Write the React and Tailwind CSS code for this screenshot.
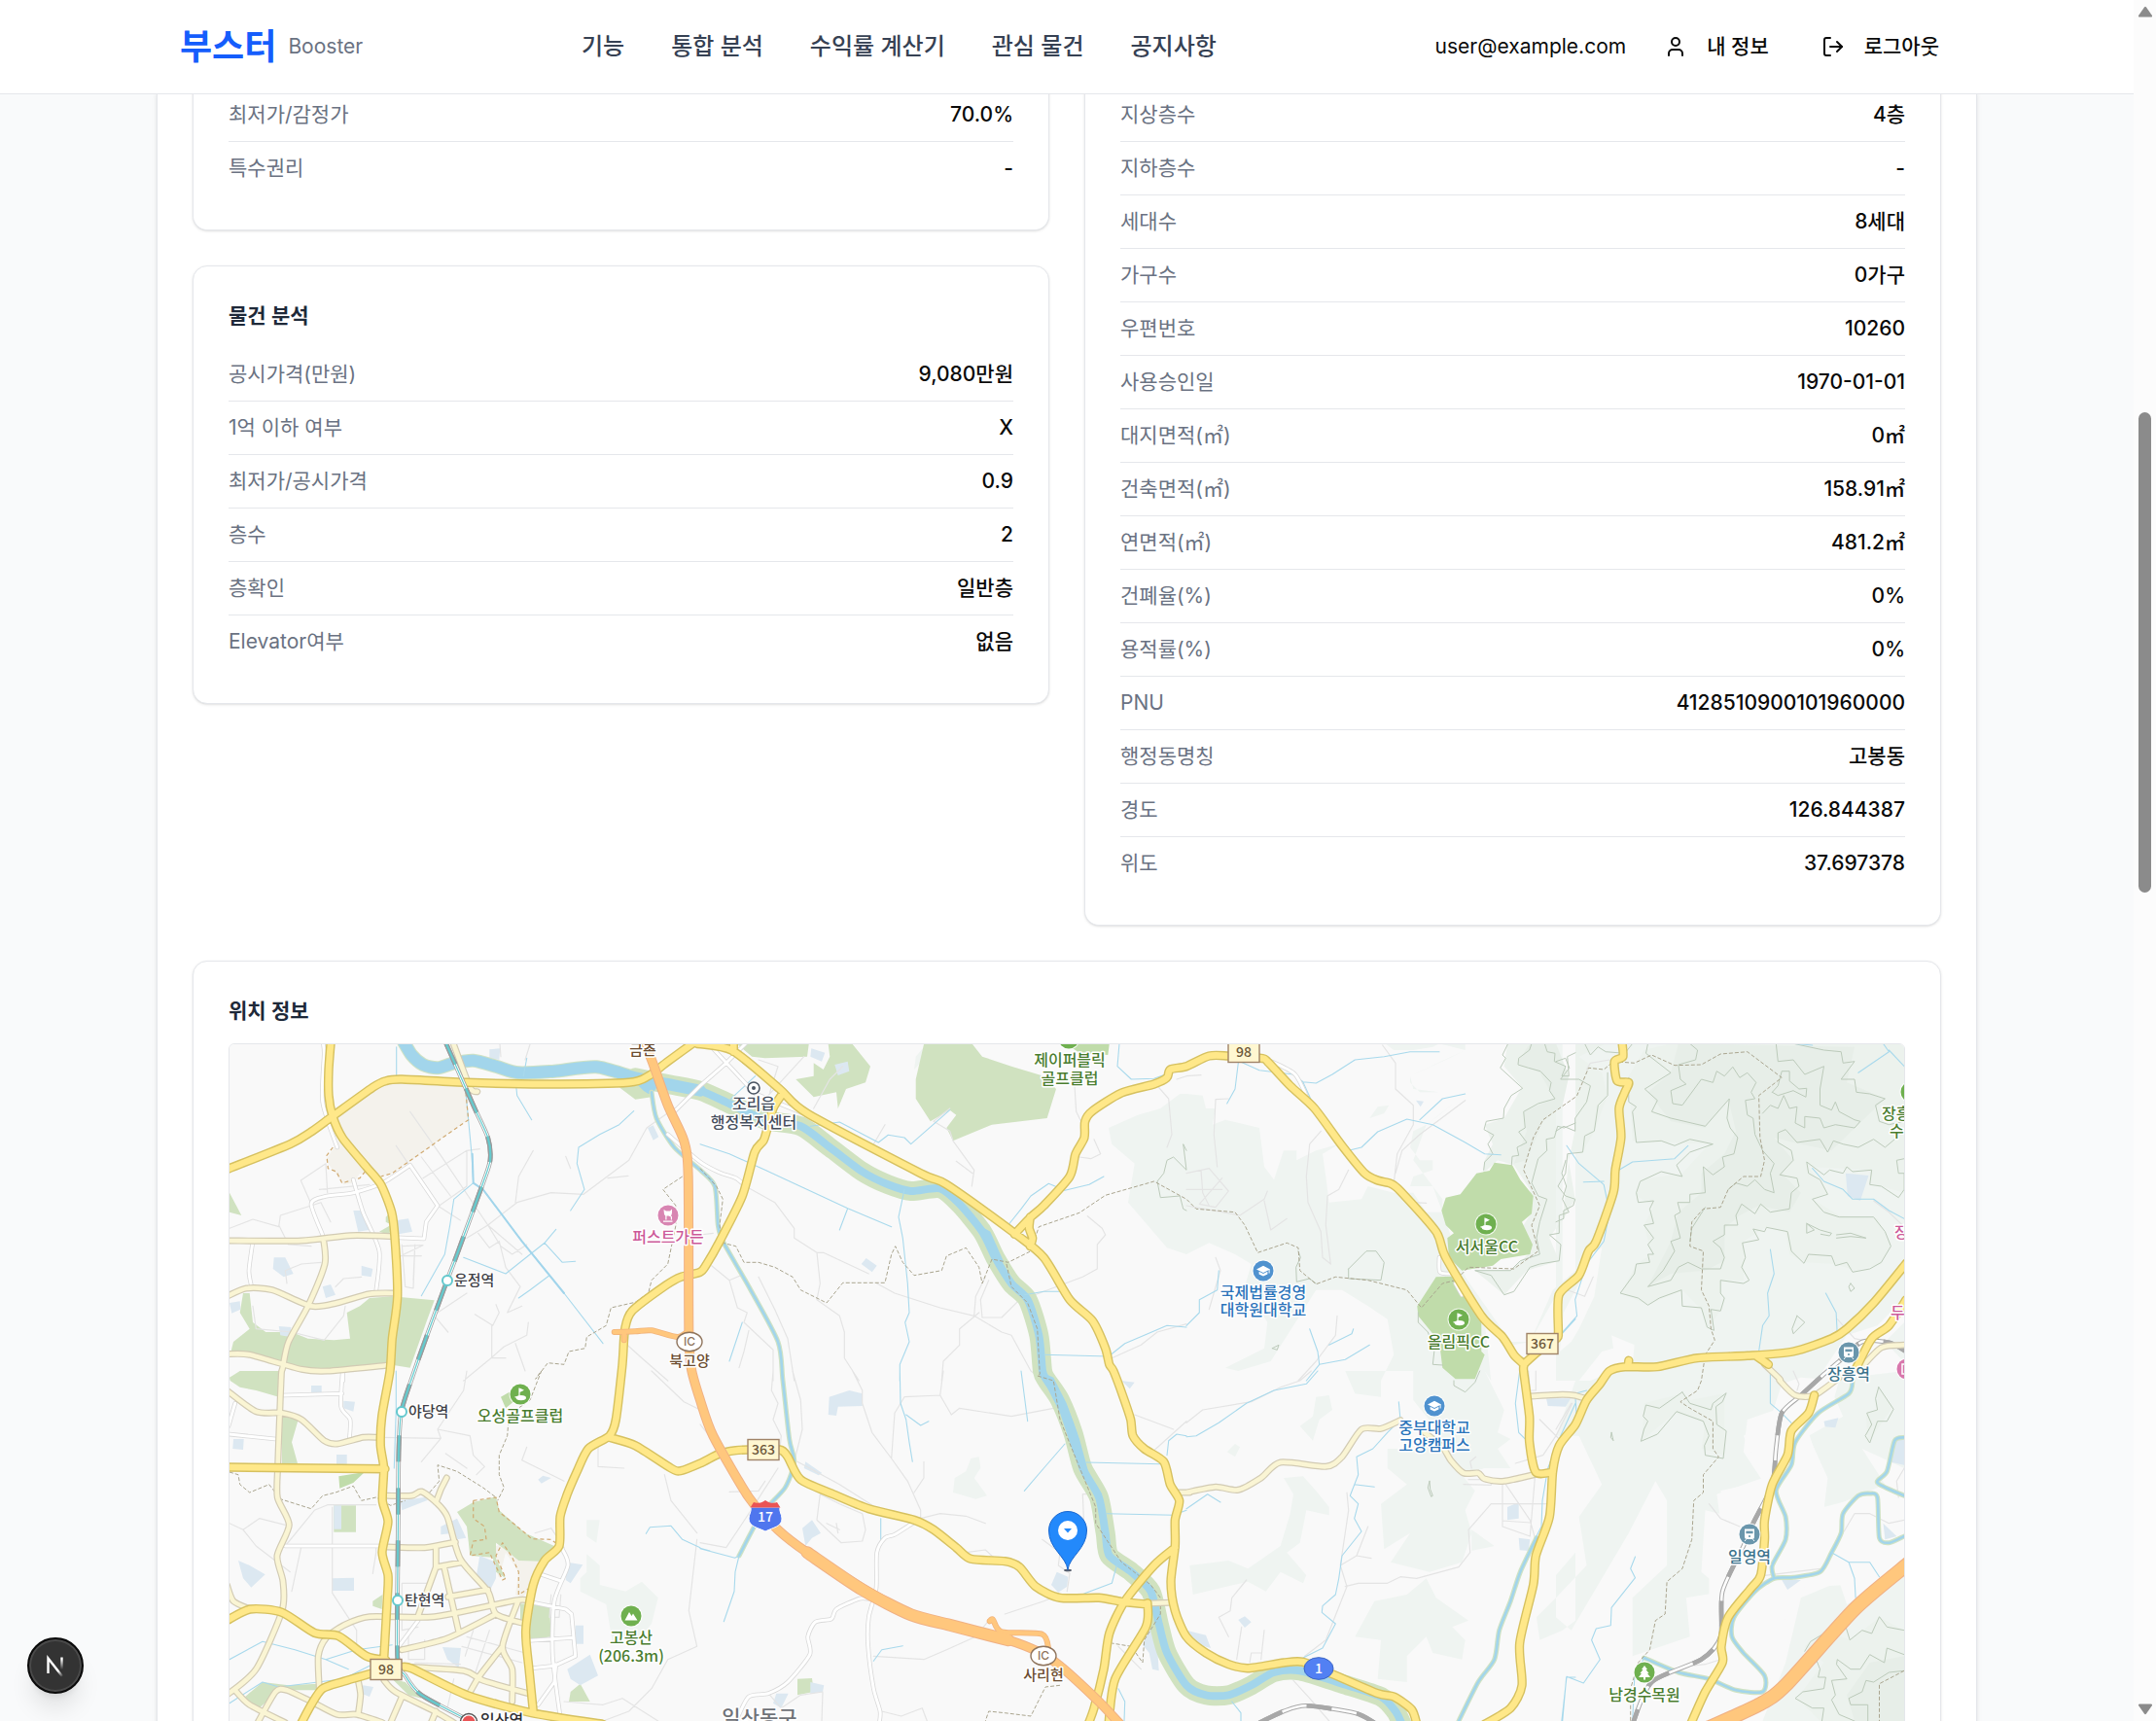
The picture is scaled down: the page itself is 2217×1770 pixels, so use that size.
import React from "react";
import { User, LogOut } from "lucide-react";

/* ---------- map geometry helpers ---------- */

// A sheet turns local map-survey coordinates into map coordinates.
const sheet = (x, y, sx = 3, sy = 3) => (list) => {
  const n = list.trim().split(/[\s,]+/).map(Number);
  const out = [];
  for (let i = 0; i < n.length; i += 2) out.push([x + n[i] / sx, y + n[i + 1] / sy]);
  return out;
};
const A = sheet(220, 1060);
const B = sheet(220, 1410);
const C = sheet(720, 1060);
const D = sheet(720, 1410);
const E = sheet(1220, 1060);
const F = sheet(1220, 1410);
const G = sheet(1600, 1060, 2.541);
const H = sheet(1600, 1410, 2.541);

const r = (v) => Math.round(v * 10) / 10;
const poly = (...parts) => "M" + parts.flat().map(([x, y]) => `${r(x)} ${r(y)}`).join("L");
const area = (...parts) => poly(...parts) + "Z";
const curve = (...parts) => {
  const p = parts.flat();
  let d = `M${r(p[0][0])} ${r(p[0][1])}`;
  for (let i = 0; i < p.length - 1; i++) {
    const p0 = p[i - 1] || p[i];
    const p1 = p[i];
    const p2 = p[i + 1];
    const p3 = p[i + 2] || p2;
    const k = 8;
    d += `C${r(p1[0] + (p2[0] - p0[0]) / k)} ${r(p1[1] + (p2[1] - p0[1]) / k)} ${r(p2[0] - (p3[0] - p1[0]) / k)} ${r(p2[1] - (p3[1] - p1[1]) / k)} ${r(p2[0])} ${r(p2[1])}`;
  }
  return d;
};

/* ---------- map data ---------- */

const forest = [
  area(E("600 30 640 60 700 60 760 50 780 40 860 40 860 60 800 90 690 140 690 160 720 190 780 190 830 220 780 260 740 290 700 310 690 360 720 400 760 400 760 430 700 450 690 480 760 480 790 520 790 560 740 560 700 500 640 500 560 480 540 520 440 530 430 450 420 380 470 350 400 370 340 400 340 370 300 370 270 460 240 420 225 300 120 275 80 290 90 240 60 240 50 200 0 195"), C("1480 195 1420 240 1350 260 1260 300 1270 350 1340 410 1320 530 1380 600 1440 670 1500 690"), E("0 690 70 655 150 690 200 720 180 790 250 900 240 980 120 1040 160 1050 260 1020 400 800 480 800 560 850 620 890 640 1000 600 1080"), F("600 80 520 70 490 0 700 0 700 90 780 190 700 240 620 240 620 300 680 350 600 410 610 550 690 500 630 590 750 620 850 590 880 500 860 430 890 370 850 320 920 300 1000 300 960 240 1000 210 960 190 980 120 920 0"), E("940 1080 920 900 1010 970 1060 960 1130 800 1200 740 1200 30")),
  area(E("780 40 1160 30 1160 780 1060 960 1000 960 860 760 790 560 760 480 700 400 740 290 830 220 780 190 700 180 690 140 860 60")),
  area(G("0 40 910 40 910 1080 0 1080")),
  area(H("60 0 400 0 910 0 910 300 800 240 860 350 700 430 710 330 660 200 750 140 720 60 500 150 490 250 540 340 430 370 460 450 390 430 380 620 440 680 340 700 350 820 200 880 200 700 290 600 290 400 260 340 190 500 40 800 0 760 0 700 80 600 60 450 120 350 60 200 0 200")),
  area(H("910 620 910 1080 540 1080 600 900 640 700 740 650 760 720")),
  area(F("300 330 360 325 400 370 440 420 440 445 370 430 350 530 310 560 370 630 360 655 290 620 245 680 190 650 20 690 10 600 130 585 190 610 290 540 320 440 330 380")),
  area(F("740 640 770 700 870 770 820 790 860 830 850 890 760 870 740 820 680 880 680 960 590 950 600 830 520 820 580 710 680 690")),
  area(F("440 75 450 120 410 150 390 215 350 170 390 140 400 80")),
  area(F("150 225 165 235 150 265 125 250")),
  area(F("1200 560 1140 630 1140 700 1080 760 1090 830 1160 800 1200 770")),
  area(F("880 490 950 540 880 555")),
  area(D("860 265 865 300 845 330 885 385 850 395 780 375 785 330 820 310 835 270")),
  area(B("1190 660 1270 680 1320 650 1370 700 1350 780 1300 840 1230 840 1210 720 1130 680 1130 640 1150 620 1150 565 1190 600 1190 640")),
  area(B("1150 460 1190 460 1180 530 1150 510")),
  area(E("565 270 590 235 625 230 610 255")),
  area(C("690 50 665 80 660 120 680 100")),
];

const clearings = [
  area(G("90 690 120 670 100 820 60 920 40 960 10 990 20 870 60 780")),
  area(G("145 940 205 970 200 1030 130 1060 90 1080 60 1080 120 990 150 980")),
  area(G("890 850 910 850 910 900 860 960 900 1010 910 1050 700 1080 680 1080 760 940 840 910")),
  area(H("640 20 740 30 720 110 660 190 700 330 700 420 860 370 910 400 910 600 760 660 620 670 560 950 430 1080 340 1080 400 900 400 600 430 460 420 380 540 330 490 200 560 150 590 40")),
];

const upland = [
  area(E("990 40 980 110 1035 175 980 270 920 290 945 350 920 400 915 440 960 400 1010 415 1060 490 1065 560 1040 600 1065 680 1000 740 890 740 980 815 1050 740 1150 710 1120 640 1160 580 1180 400 1200 300 1200 40")),
  area(G("0 40 130 40 60 80 120 130 135 200 100 310 70 375 30 380 50 520 0 620")),
  area(G("190 140 230 60 300 40 910 40 910 500 820 470 820 430 660 420 710 500 670 520 740 570 840 580 875 660 850 720 780 740 730 720 650 715 610 690 600 620 550 605 490 650 490 770 430 770 430 860 400 920 380 860 330 800 240 845 170 810 210 720 250 690 230 600 255 540 210 510 220 460 330 440 400 350 200 340")),
  area(H("230 100 330 70 350 90 440 70 440 260 380 240 390 160 310 130 225 215")),
  area(H("840 50 880 110 840 180 815 220 810 130 840 120")),
  area(H("845 760 910 800 910 1080 690 1080 630 1010 700 900 650 850 700 800 770 830")),
];

const highland = [
  area(G("320 40 780 50 760 160 860 210 720 370 640 350 570 330 620 400 590 440 640 500 610 560 530 540 480 570 440 610 440 710 390 740 300 750 240 790 300 650 320 560 380 500 380 440 440 380 470 310 450 210 390 300 300 280 240 190 300 130")),
  area(E("1060 40 1140 40 1180 140 1160 230 1100 280 1050 400 1010 410 1050 310 1040 250 1135 210 1090 130 1020 100")),
  area(H("910 880 820 900 760 1000 780 1080 910 1080")),
];

const contours = [
  poly(E("992 40 975 75 985 85 968 115 1037 178 1002 200 980 240 978 270 925 280 918 305 948 322 930 350 945 380 920 405 917 430")),
  poly(E("1105 40 1113 65 1137 70 1135 95 1170 110 1158 140 1180 140 1175 80 1200 68")),
  poly(E("1065 40 1058 60 1025 85 1023 105 1055 115 1092 125 1125 160 1120 185 1137 210 1085 225 1040 250 1045 300 1025 312 1050 345 1020 360 1025 385 1005 388 1003 415")),
  poly(E("1200 285 1165 300 1145 295 1135 330 1110 335 1112 370 1085 395 1065 470 1085 510 1112 520 1090 590 1080 640 1090 690 1030 710 1000 740 890 740 940 755 980 815 1010 805 1060 730 1090 720 1150 710 1155 660 1120 630 1150 625 1150 570 1180 560 1160 520 1172 480 1158 440 1170 400")),
  poly(E("500 735 555 680 585 680 610 715 600 770 500 765 500 735")),
  poly(E("345 680 352 700 338 730 340 775 380 765 400 780")),
  poly(E("715 870 715 900 745 930 765 985 760 1030 790 1032")),
  poly(E("265 980 285 970 280 985 265 980")),
  poly(F("905 0 890 35 860 65 825 45 825 30")),
  poly(F("750 340 745 360 755 388 760 385 752 365 750 340")),
  poly(G("75 40 90 75 110 50 130 65 180 70 200 40"), G("240 40 235 70 300 130 232 180 265 215 250 250 300 270 390 295 453 210 447 270 455 300 475 330 465 380 435 390 440 420 410 445 385 420 390 500 350 505 350 530 318 530 325 560 310 570 325 640 300 650 310 680 280 740 240 790 300 770 320 730 345 715 380 735 430 735 440 700 430 670 410 650 440 630 440 600 475 600 470 570 485 535 520 565 535 535 560 560 610 550 615 500 635 480 630 455 585 445 620 400 615 370 580 345 580 315 600 305 630 345 690 335 710 375 725 340 750 350 790 360 830 335 860 360 890 330")),
  poly(G("350 40 370 60 365 90 320 105 325 150 340 165 300 185 305 225 330 230 380 150 410 160 420 125 440 140 462 112 480 145 500 130 523 160 510 190 520 210 495 215 500 260 515 270 520 320 540 370 570 410 560 440 570 500 545 490 520 460 500 480 470 470 450 490")),
  poly(G("390 545 355 610 350 650")),
  poly(G("575 40 580 95 620 90 650 135 700 110 690 180 690 230 720 245 730 220 740 250 780 275 795 280 780 300 730 290 700 300 690 270 650 265 650 300 625 285 630 235 610 240 595 200 580 240 560 230 540 255")),
  poly(G("565 190 580 170 590 125 610 125 610 155 635 180 655 178 653 205 620 185 580 200 565 190")),
  poly(G("620 40 700 60 745 65 750 100 780 95 745 150 780 150 785 190 820 195 860 210 835 230 845 280 870 290 910 280")),
  poly(G("910 395 890 400 895 440 910 440"), G("910 490 895 515 850 480 820 475 825 430 775 435 760 420 750 440 715 430 700 445 655 405 660 440 690 460 710 505 670 520 700 560 740 575 830 575 860 620 875 665 850 715 820 735 775 745 760 715 730 725 720 695 660 690 648 718 615 680 605 620 550 607 545 620 515 612 530 645 487 655 495 700 485 730 505 770 490 780 430 770 430 810 440 825 430 865 405 860 413 925 395 915 380 855 330 850 328 800 270 825 240 847 215 825 168 810 205 750 210 720 245 715 240 690 255 690 240 660 255 640 230 600 255 595 245 550 255 525 215 530 210 500 220 465 275 435 330 450 315 415 350 375 410 350 350 335 310 355 275 340 210 345 200 250 210 235 190 220 190 145")),
  poly(G("0 95 25 85 35 115 12 150 60 150 90 170 80 220 50 270 50 310 20 295 0 310")),
  poly(G("135 130 135 200 110 230 100 310 75 325 70 375 30 380 25 440 5 480 25 510 50 520 45 540 20 555 20 580 0 590")),
  poly(G("655 595 675 615 655 625 655 595"), G("690 615 720 625 715 633 692 628")),
  poly(G("733 630 770 625 810 640 770 635 733 640")),
  poly(G("770 780 780 795 770 805 765 790 770 780")),
  poly(G("630 880 650 900 620 935 617 920 630 880")),
  poly(H("330 65 350 100 405 120 410 100 445 68 435 95 418 110 420 165 445 185 437 270 390 260 388 230 400 200 385 155 315 125 265 195 222 217 230 180 240 155 228 140 235 105 270 115 330 65")),
  poly(H("843 50 882 118 865 155 840 155 820 222 808 200 825 165 812 130 840 120 835 85 843 50")),
  poly(H("650 865 665 835 700 810 755 780 768 830 800 800 825 810 845 758 865 790 910 800")),
  poly(H("680 890 690 920 685 945 705 945 700 980 645 990 625 1010 670 1040 700 1040 695 1080")),
  poly(H("910 875 865 855 858 900 820 875 795 920 770 920 735 890 733 905 760 950 720 955 730 1000 720 1015 740 1060 780 1080")),
  poly(H("910 925 870 930 830 960 810 955 800 990 765 1010 770 1030 815 1030 815 1080")),
  poly(H("145 190 150 215 143 205 145 190")),
  poly(C("1500 370 1490 350 1500 430 1460 390 1440 400 1430 440 1410 465 1420 515 1480 510 1490 550 1500 555")),
];

const parks = [
  area(A("48 500 85 570 48 560")),
  area(A("90 810 110 810 120 900 160 930 240 930 290 950 370 955 420 950 410 870 450 850 480 825 550 820 680 832 655 900 605 1040 540 1030 350 1050 270 1050 110 1000 50 1000 60 960 110 920 80 870")),
  area(B("48 20 80 0 205 0 200 80 130 60 80 50 50 30")),
  area(B("210 140 260 150 240 220 258 285 210 285")),
  area(B("370 415 438 415 438 497 370 497")),
  area(B("490 710 520 690 518 735 490 725")),
  area(B("750 435 800 405 870 388 880 430 960 500 1050 540 1020 588 940 585 910 560 870 530 870 580 900 640 870 620 860 575 790 570 780 480")),
  area(B("945 718 1035 725 1040 820 970 830 945 775")),
  area(B("90 1010 150 960 230 970 320 965 320 985 200 985 140 1040 100 1030")),
  area(B("550 950 590 960 640 1010 600 1000")),
  area(B("1100 990 1130 965 1160 1020 1095 1020")),
  area(A("1250 175 1360 165 1350 205 1300 212")),
  area(A("510 620 545 600 545 560 530 575 530 590 548 600 540 630")),
  area(C("115 42 335 42 330 80 200 85 160 80")),
  area(C("395 42 470 42 525 110 510 160 450 180 425 240 420 190 350 205 295 150 350 140 350 100 380 120 400 80")),
  area(C("690 42 840 42 870 80 960 110 1060 140 1098 180 1070 270 900 290 780 340 760 300 790 260 770 245 710 280 665 210 665 150")),
  area(D("300 950 345 948 350 990 300 1000")),
];
const golf = [
  area(E("950 407 1005 415 1030 460 1070 510 1065 565 1035 590 1068 660 1060 690 970 705 945 725 850 740 810 700 805 640 825 625 800 600 787 555 800 515 845 505 895 440 935 432")),
  area(E("770 760 830 758 870 820 910 880 910 990 920 1000 890 1075 830 1075 790 1040 780 960 715 880 712 850")),
  area(C("1130 42 1262 42 1258 75 1170 68")),
  area(B("885 80 920 60 930 90 900 115")),
  area(B("385 325 465 312 430 345 388 362")),
];
const sands = [area(A("366 264 490 180 560 160 775 165 783 275 720 320 610 400 550 440 515 450 400 320")), area(A("390 330 500 450 450 440 430 470 400 475 345 400")), area(B("870 540 900 530 940 585 1020 588 985 660 950 700 930 690 940 620 900 560 880 640 860 590"))];
const ponds = [
  area(A("430 555 465 555 478 615 445 620")), area(A("565 585 600 580 612 620 570 628")), area(A("185 700 220 700 245 750 215 760 182 735")),
  area(A("455 725 490 735 485 760 455 755")), area(A("335 790 360 783 375 815 345 825")), area(A("1338 300 1355 292 1372 328 1355 338")), area(A("850 58 883 55 880 90 850 85")), area(A("200 912 238 915 235 945 205 940")), area(A("48 840 80 835 82 860 55 872")),
  area(B("75 585 110 600 158 628 115 668 90 640")), area(B("365 640 432 638 432 678 365 678")), area(B("370 415 393 415 393 488 370 488")), area(B("378 258 410 258 410 288 378 288")), area(B("60 210 92 210 90 243 58 240")), area(B("300 45 332 45 332 72 300 72")), area(B("400 92 435 95 430 125 400 115")),
  area(B("575 400 650 390 660 398 580 430")), area(B("700 480 750 455 778 515 750 520 740 500 700 505")), area(B("820 570 870 590 870 640 850 680 810 630")), area(B("1090 590 1138 598 1100 655 1085 645")), area(B("1090 920 1160 875 1185 940 1130 970 1100 950")), area(B("705 852 762 855 755 915 720 890")), area(B("1000 335 1015 323 1040 330 1010 347")), area(B("1115 785 1140 785 1140 842 1112 842")), area(B("460 970 492 975 480 1005 455 995")),
  area(C("343 55 385 68 375 95 340 80")), area(C("415 105 455 95 460 125 425 138")), area(C("512 702 545 725 530 745 497 720")),
  area(D("398 80 460 60 500 70 500 108 425 110 420 138 395 135")), area(D("345 460 372 500 345 515 325 540 315 485")), area(D("325 280 376 315 365 322 320 300")), area(D("1100 620 1135 635 1132 665 1105 683 1083 660")), area(D("1390 780 1410 850 1415 925 1395 920 1385 870 1365 845")), area(D("340 960 382 970 378 990 340 995")), area(D("235 995 272 995 250 1040 225 1025")), area(D("1300 30 1340 35 1325 55")),
  area(F("160 768 180 757 200 775 180 792")), area(F("990 420 1025 405 1025 455 990 460")), area(F("1025 515 1060 520 1055 555 1028 553")), area(F("1110 85 1185 85 1170 110 1115 108")), area(F("0 800 60 815 75 855 20 840")),
  area(G("757 440 817 447 795 525 762 510")), area(H("880 220 910 205 910 290 870 280")), area(H("700 155 738 145 730 175 703 172")), area(H("855 470 890 510 860 520")), area(H("590 645 640 645 605 675")), area(E("708 215 732 218 722 235")),
];

const riverUpper = curve(A("580 25 610 75 645 105 690 115 740 100 800 92 870 110 940 130 1050 125 1180 112 1300 145 1400 165 1500 185"));
const riverPath = curve(A("1300 145 1400 165 1500 185"), C("90 225 200 275 310 295 400 360 500 435 580 475 650 495 740 487 800 535 870 620 910 700 960 780 1010 830 1045 940 1056 1050"), D("1070 30 1110 90 1150 190 1180 300 1230 390 1250 500 1262 570 1330 620 1390 680 1415 780 1440 870 1500 970"), F("60 1000 130 1000 200 970 270 930 350 925 480 965 600 1005 645 1050 665 1090"));
const broadWater = [
  area(D("1045 0 1090 20 1130 100 1170 210 1200 320 1240 380 1230 400 1190 340 1150 250 1110 130")),
  area(C("860 600 895 620 935 710 930 725 900 700")),
  area(A("1290 150 1350 150 1370 170 1355 190 1340 195 1325 185")),
];

const streamsWide = [
  curve(A("1350 190 1365 270 1420 360 1500 430"), C("45 480 55 600 70 650 150 790 240 960 255 1080"), D("275 210 290 280 262 360 190 440 120 570")),
  curve(H("775 30 765 70 685 130 625 220 615 290 575 370 600 450 600 520 565 600 570 640")),
  curve(H("910 510 870 530 845 515 840 390 820 378 790 385 750 440 745 500 720 560 690 620 620 637 570 640 520 680 465 760 460 820 490 870 545 940 540 990 470 985 400 950 320 930 230 885")),
  curve(F("1080 515 1030 620 1000 710 965 800 950 890 900 960 840 1080")),
  curve(H("910 205 885 215 865 310 840 345 910 385")),
];
const streams = [
  poly(A("563 50 563 150")), poly(A("775 170 795 380 800 470 740 520 728 600 712 690 640 818")), poly(A("800 470 830 490 950 650 1080 810 1200 965")), poly(A("770 700 900 750 1020 655 1055 613")), poly(A("1020 655 1075 715 1115 712")), poly(A("1295 248 1250 290 1190 320 1125 360 1120 410 1143 490 1100 555")), poly(A("932 170 935 200 980 275")), poly(A("1035 755 975 800 940 825")), poly(A("955 140 965 85")),
  poly(C("0 350 90 380 200 430 455 548 590 605")), poly(C("455 548 430 615")), poly(C("630 490 612 575 625 640 640 780 645 870 632 900 645 960 616 1030 616 1080")), poly(C("340 295 430 282 550 345 580 322 630 330 650 350 770 245")), poly(C("950 600 990 550 1020 510 1075 472 1125 493 1200 475 1245 450")), poly(C("1293 40 1287 110 1330 150 1400 148 1450 130 1500 120")), poly(C("1060 1000 1260 1005 1310 965 1370 940 1440 910 1500 915")), poly(C("1000 815 1060 805 1110 805")), poly(C("130 900 90 1020")), poly(C("90 215 170 140")),
  poly(D("616 0 618 100 635 150 645 220 655 280")), poly(D("635 135 680 168 705 155")), poly(D("1125 225 1060 300 1000 370")), poly(D("990 0 1010 155")), poly(D("1190 282 1420 287")), poly(D("1255 440 1460 445 1500 430")), poly(D("1440 260 1445 215 1470 195 1500 200")), poly(D("1285 600 1270 655 1190 685 1150 705")), poly(D("0 548 107 577 120 570 108 620 105 680 73 773")), poly(D("535 895 560 860 625 848")), poly(D("1290 980 1310 1020 1308 1080")), poly(D("557 455 557 525")),
  poly(E("165 95 225 122 330 135 360 158 400 162 450 135 520 90 610 80 690 65 780 65")), poly(E("500 370 540 360 590 312 680 273 760 290 860 345 920 380 970 383")), poly(E("720 275 790 210 860 195")), poly(E("330 130 360 160 390 225")), poly(E("160 100 150 180 125 225")), poly(E("380 920 405 990 410 1030 370 1080")), poly(E("515 920 510 935 440 970")), poly(E("410 1030 490 1015 565 970")), poly(E("100 740 95 800 40 830 40 870 0 910")), poly(E("1200 890 1145 950")),
  poly(F("405 0 370 40 270 60 185 100 100 160 30 200 0 203")), poly(F("0 425 65 380 105 405")), poly(F("655 95 660 150 620 190 575 240 525 265 530 320 505 385 530 410 518 455 540 495 480 570 470 640 460 690 420 725 418 745 460 780 420 855 360 885")), poly(F("518 350 580 358")), poly(F("1028 0 1015 100 1025 190 1050 215")), poly(F("1200 100 1150 210 1115 300 1098 400 1095 480 1075 520")), poly(F("1160 1080 1172 945 1200 945")), poly(F("140 1020 168 1055 168 1080")),
  poly(G("345 355 310 395 200 405 165 430")), poly(G("28 355 60 410 125 475 140 560 125 650 80 720 50 830 55 880 10 940")), poly(G("72 467 125 465")), poly(G("670 425 700 465 750 490 775 520 830 520 870 555 910 580")), poly(G("855 40 870 65 790 130")), poly(G("870 60 910 110")), poly(G("560 675 570 750 553 810 557 880 540 910 530 990")), poly(G("705 810 732 870 735 940")), poly(G("620 40 670 45")),
  poly(H("207 573 195 610 207 638 145 730 143 785 105 795 93 830 115 890 72 963 28 943 15 1080")), poly(H("720 560 765 590 820 590 845 635")), poly(H("765 590 780 640 783 700")), poly(H("560 0 560 100 590 130 615 160")), poly(H("80 60 50 70 55 160 0 240")), poly(H("230 885 205 950 200 1080")),
  poly(B("48 890 150 835 250 860 345 890 415 920")), poly(B("345 890 440 860 550 845")), poly(B("48 1025 150 960 200 975 400 950 480 910")), poly(B("562 0 562 120 556 300")), poly(B("1333 502 1345 482 1410 478 1445 520 1500 545")), poly(D("0 547 30 555")),
];
const canals = [poly(A("797 380 800 470")), poly(A("800 470 830 490 950 650 1080 810"))];

const lanes = [
  poly(A("605 250 700 385 845 600 950 690")), poly(A("562 355 640 470 690 540 760 585")), poly(A("640 390 730 510")), poly(A("645 455 780 370 820 365")), poly(A("695 540 780 480 780 370")), poly(A("845 600 935 530 1040 500 1140 505 1280 400 1335 300 1420 240")), poly(A("930 530 940 450 985 370")), poly(A("780 640 845 600 885 665 920 690 965 660")), poly(A("880 650 900 730 945 790 905 870 950 850")), poly(A("815 625 850 670 880 650")), poly(A("48 610 120 582 200 605 205 570 330 530 360 590")), poly(A("300 535 268 462 345 410 350 500")), poly(A("200 600 230 660 300 665")), poly(A("325 490 480 475")), poly(A("1085 388 1100 425")), poly(A("1215 455 1278 448")), poly(A("770 1080 855 1010 895 975 965 940 970 900")), poly(A("805 875 860 910 880 870 870 845")), poly(A("857 910 857 1010 900 1010")), poly(A("930 965 960 1050")), poly(A("680 880 722 930")), poly(A("690 870 780 810")), poly(A("580 660 590 790 615 795"), A("620 660 615 770")), poly(A("580 665 645 662"), A("575 695 640 695")), poly(A("375 790 400 765 455 760")), poly(A("120 850 130 920 240 930 340 955 400 880 405 850")), poly(A("975 42 960 90")), poly(A("882 42 885 80")), poly(A("225 780 220 740 270 720 330 715")), poly(A("1275 970 1320 1010 1400 1080")),
  poly(B("48 470 90 490 140 455 220 475")), poly(B("90 490 130 540 235 620")), poly(B("220 540 310 430 350 413 500 413")), poly(B("365 420 365 685 440 800 440 850")), poly(B("240 680 270 540")), poly(B("520 205 700 208 690 180 770 60 780 0")), poly(B("690 180 790 200 800 260 835 295 810 320")), poly(B("700 208 640 280")), poly(B("715 255 780 300")), poly(B("965 235 950 275 1080 340")), poly(B("1185 230 1185 295 1265 300")), poly(B("1390 320 1410 400 1490 500")), poly(B("1350 0 1450 95 1500 120")), poly(B("1490 520 1465 740 1490 850 1400 890 1350 980 1280 1050 1200 1080")), poly(B("580 655 660 655")), poly(B("580 655 580 800 630 790")), poly(B("990 500 1040 485 1080 545")), poly(B("1040 690 1035 760 1065 760 1070 690")), poly(B("780 820 960 870")), poly(B("765 850 950 900")), poly(B("800 800 775 880")), poly(B("850 800 800 950")), poly(B("900 800 870 880")), poly(B("740 950 720 1040")), poly(B("620 900 760 905")), poly(B("600 800 600 890 650 890 650 830")), poly(B("1080 1020 1200 1030 1260 1010 1370 1080")), poly(B("490 625 500 560 500 540")),
  poly(C("140 480 230 530 290 610 290 640 360 685 380 685 520 750")), poly(C("360 685 370 780 360 830 430 880 445 930 445 1010 490 1080")), poly(C("545 780 600 810 740 855 845 880 930 930 960 940 1020 1050 1060 1080")), poly(C("845 880 850 820 880 760")), poly(C("890 770 865 830 870 885 930 885 980 835 1180 760 1225 735 1225 660 1250 630 1240 610 1195 572")), poly(C("860 870 800 920 800 970 750 1020 745 1080")), poly(C("1155 170 1160 250 1180 290")), poly(C("770 240 720 280 770 310 780 340 845 430 838 480")), poly(C("790 403 840 440")), poly(C("570 290 535 350")), poly(C("180 90 240 110 215 190")), poly(C("210 200 320 80")), poly(C("350 240 400 150 440 110")), poly(C("35 725 90 770 115 855 145 870 135 900 225 985 225 1080")), poly(C("180 760 230 860 270 950 290 1080")), poly(C("150 925 135 990 120 1040")), poly(C("0 630 40 625")), poly(C("90 770 125 755")), poly(C("1215 335 1235 380 1205 395 1170 390")), poly(C("1410 170 1445 210 1455 320 1440 360")), poly(C("1500 140 1470 150")), poly(C("1270 1010 1360 970 1410 930 1500 905")),
  poly(D("225 0 220 60 240 100 225 150 250 200 245 250")), poly(D("285 0 310 90 315 180 290 280")), poly(D("470 0 500 60 500 100 530 190 590 270 640 340 680 430 680 460")), poly(D("590 270 600 130 630 80 740 75 750 0")), poly(D("740 75 775 135 800 115 960 140 1090 115")), poly(D("660 375 690 330 690 280")), poly(D("680 455 740 440 820 448 880 470")), poly(D("300 280 430 350 540 420")), poly(D("360 460 370 380 430 410 500 440 510 490 500 525 435 530 360 460")), poly(D("0 530 80 545 150 440 240 300")), poly(D("820 560 880 552 905 575")), poly(D("1055 520 1110 560 1105 600 1140 625 1132 680")), poly(D("1185 500 1180 380 1190 380")), poly(D("940 750 1060 710 1110 690 1200 690")), poly(D("535 880 690 890 760 860 850 820 890 770")), poly(D("1340 135 1460 180")), poly(D("1400 245 1500 155")), poly(D("560 1050 620 1065 685 1040 700 1080")), poly(D("215 1000 250 1040 310 1000 378 990 375 1080")), poly(D("90 373 180 370 200 340")), poly(D("390 470 430 490")), poly(D("420 470 425 500")), poly(D("1290 850 1360 920")), poly(D("0 165 40 215")),
  poly(E("605 45 645 100 645 180 700 230 700 290 650 380 640 470")), poly(E("860 215 720 320 665 370 645 440")), poly(E("130 210 90 212 85 320 95 420")), poly(E("415 310 380 350 370 450 375 530 415 620 420 700 445 720 430 600 435 510 470 490 500 430")), poly(E("250 495 240 520 165 570 0 540")), poly(E("240 525 260 615 310 580")), poly(E("0 440 70 425 130 495 90 545 40 535 110 455")), poly(E("45 430 50 500 70 540")), poly(E("0 490 110 490")), poly(E("90 700 105 740 70 860")), poly(E("345 1080 400 1020 460 940 465 880")), poly(E("0 140 45 137")), poly(E("700 530 740 532")),
  poly(F("0 160 50 120 200 95 290 50 350 30 385 0")), poly(F("495 375 500 430 475 600 495 665 430 830 365 880")), poly(F("490 665 530 655 620 655 660 635 710 640 840 605 875 560 870 490 940 410 1110 410")), poly(F("475 600 525 570 560 480")), poly(F("525 570 570 578")), poly(F("975 350 975 480 1060 510 1075 330")), poly(F("985 350 1060 460 1075 515")), poly(F("975 462 1060 468")), poly(F("1190 100 1140 200 1100 260 1015 285")), poly(F("1090 150 1150 210")), poly(F("185 645 140 700 135 740 100 760 130 820")), poly(F("170 790 155 890")), poly(F("240 800 230 890")), poly(F("195 900 200 870 230 870")), poly(F("855 350 940 352 940 335 870 335")), poly(F("330 955 380 1010 440 1080")), poly(F("1055 0 1060 60 1078 60 1078 0")), poly(F("880 300 875 280 893 265")),
  poly(G("30 800 75 820 97 760")), poly(G("80 120 90 100 140 90")), poly(G("830 525 870 560 905 600")), poly(G("735 890 780 950 820 960")), poly(H("400 410 430 455 480 480")), poly(H("720 560 780 440 820 440 870 470 910 460")), poly(H("540 632 690 610")), poly(H("620 0 635 40 630 60")), poly(H("910 300 890 340 895 390")), poly(H("350 910 390 905 430 890")), poly(H("0 180 40 100")),
];

const boundaries = [
  poly(A("1445 450 1385 490 1425 540 1425 600 1400 720 1350 770 1340 810 1300 838 1225 855 1210 910 1150 945 1145 980 1095 990 1080 1030 1030 1025 992 1075"), B("1010 0 975 90 910 135 905 200 880 260 880 320 895 360 875 400")),
  poly(C("0 425 50 480 70 520 60 600 70 655 110 665 135 715 180 715 230 730 285 760 310 800 390 840 440 778 570 778 590 690 602 665 625 715 660 755 745 740 760 695 820 670 860 730 870 780 900 705 950 715 1020 680 1045 605 1170 562 1250 508 1400 465 1500 520"), E("30 550 150 560 180 600 220 685 310 655 345 670 350 740 400 782 460 760 560 770 680 800 725 855 790 780 830 770 870 730 1010 735 1085 680 1065 600 1090 540 1040 430 1070 330 1100 275 1200 205"), G("55 200 85 115 125 120 150 95 205 100 250 75 310 107 380 105 430 72 500 65 590 145 530 200 533 330 545 400 535 450 490 450 450 490 430 545 385 550 355 590 350 665 385 680 380 800 400 850 405 920 415 955 390 1000 380 1080"), H("370 60 325 95 350 115 410 155 410 240 425 265 385 320 385 375 360 400 355 520 330 610 290 650 285 750 260 770 245 860 215 900 195 980 195 1080")),
  poly(C("945 720 960 790 1010 840 1040 920 1048 1060"), D("1040 15 1090 30 1110 150 1220 420 1220 470 1300 590 1390 660 1420 700 1420 750 1370 830 1365 900 1330 850 1270 840")),
  poly(D("1110 970 1065 975 1020 1065 940 1055 890 1050 880 1080")),
  poly(B("48 312 75 320 80 350 110 375 170 350 205 395 300 425 335 385 375 375 430 355 455 400 500 390 545 415 590 400")),
  poly(B("665 375 695 340 690 290 750 310 830 360 870 390")),
  poly(H("910 925 845 965 845 1080")),
];
const siteLines = [
  poly(A("775 170 785 275 720 320 550 440 515 450")), poly(A("367 360 348 385 352 425 378 435 395 470 450 455 470 430")),
  poly(B("800 400 870 390 880 435 960 500 980 518 1040 520 1080 550")), poly(B("800 400 800 455 835 480 840 520 800 525 790 570 850 560 890 645 900 640 870 570 890 530 920 575 940 620 940 690 990 660")),
];

const whiteRoads = [
  curve(A("335 30 340 70 335 220 380 360")), curve(A("430 460 460 560 510 680 500 805")), curve(A("335 630 300 535 340 512 430 500 520 470 605 415")), poly(A("605 415 690 540 655 590 648 642 560 638")), curve(A("120 650 108 740 115 785")), poly(A("398 1045 398 1080")),
  poly(B("215 75 395 70")), curve(B("397 0 392 110 420 150 418 210")), poly(B("45 195 190 210")), poly(B("220 540 520 540")), poly(B("970 712 1085 735 1103 750 1115 880 1050 910 980 917")), poly(B("975 832 1110 823")), curve(B("1075 550 1092 600 1050 710 1045 880 1070 1080")), poly(B("1010 628 1070 648")), poly(B("1055 905 1050 960 1000 1030")), poly(B("570 850 630 770")), poly(B("45 170 65 100")),
  poly(C("0 170 80 100 140 40")), poly(C("30 45 170 195 330 260")), curve(A("1400 320 1500 405"), C("60 438 110 455 140 480")), poly(A("1420 250 1500 170")),
  curve(D("655 470 600 505 570 515 545 560 543 670 520 760 518 850 535 980 555 1050 553 1085")), curve(D("520 703 490 703 420 735 405 765 355 775 332 820 338 875 270 960 210 995 150 1005 115 1070")),
  curve(E("250 90 335 135 380 225")), curve(E("780 700 782 745 820 750")), poly(E("830 780 850 815")),
];
const paleRoads = [
  curve(A("40 648 270 648 420 632 555 635")), curve(A("338 645 342 720 290 850 230 960 212 1040"), B("208 10 203 130 197 290 196 390 232 475 195 570 213 650 210 740 130 920 40 1000")), curve(A("40 820 100 795 180 800 300 850 380 840 480 812 560 810")), curve(A("40 998 110 1000 270 1045 350 1050 530 1033")), curve(A("735 30 790 175 812 188")),
  curve(B("40 60 130 125 210 130 270 150 340 215 380 225 460 205 505 205")), curve(B("535 385 610 385 640 372 685 405 720 450 760 580 845 680 870 750 960 780")), poly(B("685 405 700 365 718 330")), curve(B("535 543 650 545 745 528")), poly(B("685 545 685 605 630 755")), poly(B("685 605 765 590")), poly(B("710 605 755 805")), curve(B("580 860 720 825 870 750")), poly(B("722 697 845 675")), curve(B("325 980 322 880 345 825 400 785 480 758 680 758 930 708 975 710")), curve(B("938 710 890 850 920 920 920 1020")), curve(B("890 850 820 940 785 1000")), curve(B("585 912 770 925 830 955 970 995")), curve(B("40 660 60 710 112 735")), curve(B("65 985 110 1030 220 1085")), curve(B("135 1085 190 990 225 985 300 1020 380 1060 440 1060 520 1085")), curve(B("445 955 452 1000 445 1060")), curve(B("525 955 560 990 680 1050 740 1085")), poly(B("580 1005 545 1085")), poly(B("685 1050 670 1085")),
  curve(F("0 375 90 358 160 367 230 330 290 282 430 295 480 265 540 180 600 178 660 152")), curve(F("735 190 790 235 815 275 855 315 900 315 920 333 980 340 1080 318")), curve(F("1060 78 1160 73 1200 76 1240 88")),
  curve(G("545 1030 585 1075"), H("585 30 625 75 675 75 740 20")), curve(G("910 970 850 978 790 1050")), poly(D("1385 717 1445 715")), poly(D("1478 375 1510 375")),
];
const yellowRoads = [
  curve(A("361 30 354 120 354 200 366 264 396 330 470 420 515 475 548 560 558 640 566 820 550 950"), B("543 0 518 140 514 230 524 300 520 400 537 465 519 560 537 630 535 700 524 890")),
  curve(A("40 428 235 350 300 312 366 264 490 175 530 155 580 150 780 160 1020 165 1280 160 1340 140 1400 95 1490 30")),
  curve(C("-10 40 100 62 245 180 330 255 680 440 760 475 970 625 1060 700 1140 830 1210 895 1250 980 1262 1030"), D("1275 0 1305 80 1328 150 1335 200 1370 240 1430 280 1450 350 1478 400 1465 460 1465 540 1452 650 1465 740 1500 820"), F("60 870 130 905 190 917 300 900 360 898 450 935 590 995 640 1005 695 1045 712 1095")),
  poly(C("103 30 103 65")),
  curve(C("250 200 225 240 205 310 195 340 168 375 130 510 60 650 20 720 0 745"), A("1440 760 1395 785 1290 865 1268 920 1262 1000"), B("1258 0 1240 150 1220 200 1155 240 1120 310 1090 380 1068 450 1065 540 1020 585 985 660 962 800 972 920 985 1050")),
  curve(B("1220 205 1300 230 1410 300 1440 308 1500 285"), D("60 255 110 245 150 243 245 243 270 265 310 335 410 380 520 425 660 460 720 490 790 545 835 580 940 587 985 605 1035 665 1110 700 1230 700 1300 712 1380 720")),
  curve(D("1380 716 1375 790 1280 950 1260 1090")),
  curve(D("1465 545 1400 600 1310 710 1262 810 1245 920 1215 1040 1195 1095")),
  curve(C("970 628 1020 575 1060 540 1140 450 1158 380 1185 330 1187 280 1210 248 1300 192 1400 165 1440 145 1450 120 1500 110"), E("70 78 130 78 230 85 250 95 320 170 395 240 480 355 550 440 590 462 630 472 660 495 770 620 800 700 910 880 975 945 1010 1000 1040 1030"), F("1040 0 1058 140 1058 220 1078 312 1130 312")),
  curve(C("1018 575 1015 610 1025 640 1018 665")),
  curve(E("1040 1030 1085 990 1142 950"), G("6 930 8 815 60 755 85 680 105 650 150 500 155 430 170 330 165 240 180 190 190 160 160 155 153 95 175 80 172 30")),
  curve(F("920 1090 1000 1040 1035 970 1028 840 1070 660 1078 570 1120 450 1130 310 1150 230 1200 165"), H("80 90 115 40"), G("140 1050 180 1037 265 1037 370 1010 500 1003 620 990 720 950 760 920 830 840 915 718")),
  curve(G("525 1005 555 1030")), poly(G("188 1037 190 1018")),
  curve(H("675 75 660 130 615 185 605 260 565 350 545 460 545 520 535 630 510 670 450 760 432 850 435 900 390 990 350 1095")),
  curve(G("915 830 870 910 825 950 785 1040")),
  poly(B("40 297 528 302")), curve(B("40 770 112 735 210 745 310 808 385 818 470 880 530 892")), curve(B("490 932 400 958 335 980 300 1030 265 1095")), curve(B("575 915 610 918 780 1000 980 1055 1200 1090")),
];
const ramps = [
  curve(A("1235 930 1300 928 1350 925 1430 945 1465 925")), poly(A("1265 955 1265 930")), curve(D("893 772 903 767 930 805 1055 812 1075 860")),
];
const expressway = curve(A("1322 30 1350 90 1400 230 1450 340 1463 450 1465 920 1472 1040"), D("0 90 40 200 150 390 240 490 330 560 500 670 650 750 760 780 950 830 1040 865 1110 910 1230 1020 1300 1095"));
const expresswayWide = curve(D("330 560 500 675 650 752 770 784 950 830"));
const ringway = curve(H("920 595 780 735 600 970 530 1030 400 1100"));
const metro = curve(A("712 30 800 230 845 330 852 400 830 470 750 690 719 771 650 960"), B("615 10 578 126 570 250 568 500 566 880 590 940 640 1000 790 1080"));
const rails = [
  curve(G("915 990 870 962 800 960 740 1020"), H("700 10 640 75 590 130 575 240 565 350 515 470 490 540 435 680 430 820 380 890 250 960 200 1090")),
  curve(F("225 1085 300 1050 370 1033 520 1055 580 1085")),
];

/* ---------- map drawing ---------- */

const Fill = ({ paths, color }) => <path d={paths.join("")} fill={color} />;
const Line = ({ paths, color, w, dash }) => (
  <path d={[].concat(paths).join("")} fill="none" stroke={color} strokeWidth={w} strokeDasharray={dash} strokeLinejoin="round" strokeLinecap={dash ? "butt" : "round"} />
);

const Label = ({ x, y, color, children, size = 16, anchor = "middle", weight = 500 }) => (
  <text x={x} y={y} fill={color} fontSize={size} fontWeight={weight} textAnchor={anchor} stroke="#fff" strokeWidth="3" strokeLinejoin="round" paintOrder="stroke">
    {children}
  </text>
);

const Badge = ({ x, y, color, children }) => (
  <g transform={`translate(${x} ${y})`}>
    <circle r="11.5" fill="#fff" opacity="0.8" />
    <circle r="10.5" fill={color} />
    {children}
  </g>
);
const GolfMark = () => (
  <g fill="#fff">
    <path d="M-1.6 -6.5h1.2V3h-1.2z M-0.6 -6.5L4 -4.2L-0.6 -2z" />
    <ellipse cx="0.8" cy="3.6" rx="5.2" ry="2.6" />
    <path d="M-5.5 2.2h4v1.2h-4z" />
  </g>
);
const SchoolMark = () => (
  <g fill="#fff">
    <path d="M0 -5.2L7 -1.6L0 2L-7 -1.6Z" />
    <path d="M-4.4 0.8L0 3L4.4 0.8V3.4L0 5.6L-4.4 3.4Z" />
    <path d="M5.6 -1.4h1v4h-1z" />
  </g>
);
const StationMark = ({ color }) => (
  <g>
    <path d="M-5 -5.5h10v8a2.5 2.5 0 0 1-2.5 2.5h-5a2.5 2.5 0 0 1-2.5-2.5z" fill="#fff" />
    <path d="M-3.6 -3.4h7.2v2.6h-7.2z" fill={color} />
    <circle cy="2" r="1.1" fill={color} />
    <path d="M-3.5 5.2L-5 7M3.5 5.2L5 7" stroke="#fff" strokeWidth="1" />
  </g>
);
const RouteSign = ({ x, y, children }) => (
  <g transform={`translate(${x} ${y})`}>
    <rect x="-16" y="-10.5" width="32" height="21" fill="#fff7d1" stroke="#a08468" strokeWidth="1.4" />
    <text y="5" fontSize="14" fontWeight="500" textAnchor="middle" fill="#6b5638">{children}</text>
  </g>
);
const Interchange = ({ x, y }) => (
  <g transform={`translate(${x} ${y})`}>
    <ellipse rx="13" ry="9.7" fill="#fff" stroke="#8f745c" strokeWidth="1.4" />
    <text y="4" fontSize="12" fontWeight="500" textAnchor="middle" fill="#8f745c" className="font-['Inter',sans-serif]">IC</text>
  </g>
);
const Stop = ({ x, y, name }) => (
  <g>
    <circle cx={x} cy={y} r="5" fill="#fff" stroke="#63c8cd" strokeWidth="2" />
    <Label x={x + 7} y={y + 5} size={15} anchor="start" color="#3f3f46" weight={500}>{name}</Label>
  </g>
);

const GREEN = "#6fb04f";
const GREEN_TEXT = "#4a7d2f";
const BLUE_TEXT = "#2b74ba";
const TEAL_TEXT = "#3d738c";
const PINK_TEXT = "#cc5a99";
const BROWN_TEXT = "#6b4c30";

function LocationMap() {
  return (
    <svg viewBox="236 1074 1722 898" preserveAspectRatio="xMidYMin slice" className="block h-[898px] w-full bg-[#f9f9f9] font-['Noto_Sans_CJK_KR','Noto_Sans',sans-serif]" role="img" aria-label="물건 위치 지도">
      <Fill paths={forest} color="#eff4f1" />
      <Fill paths={upland} color="#ecf2ed" />
      <Fill paths={highland} color="#e7eee8" />
      <Fill paths={clearings} color="#f9f9f9" />
      <Fill paths={sands} color="#f4f2ec" />
      <Fill paths={parks} color="#d0e2c0" />
      <Fill paths={golf} color="#c0dcaa" />
      <Fill paths={ponds} color="#dce8f1" />
      <Line paths={contours} color="#bccaba" w={1} />
      <Line paths={lanes} color="#e4e4e4" w={1.2} />

      <Line paths={riverUpper} color="#cfe2c4" w={14} />
      <Line paths={riverPath} color="#d0e2c0" w={20} />
      <Line paths={riverUpper} color="#a2d5eb" w={12} />
      <Line paths={riverPath} color="#a2d5eb" w={8} />
      <Fill paths={broadWater} color="#a2d5eb" />
      <Line paths={streamsWide} color="#cfe2c4" w={5} />
      <Line paths={streamsWide} color="#a2d5eb" w={2.6} />
      <Line paths={streams} color="#a8d9ec" w={1.1} />
      <Line paths={canals} color="#a2d5eb" w={2} />
      <Line paths={boundaries} color="#aaa58f" w={1} dash="4 2" />
      <Line paths={siteLines} color="#d0aa72" w={1.2} dash="4 3" />

      <Line paths={whiteRoads} color="#d9d9d9" w={4.6} />
      <Line paths={whiteRoads} color="#ffffff" w={3} />
      <Line paths={rails} color="#a8a8a8" w={4.6} />
      <Line paths={rails} color="#ffffff" w={2.6} />
      <Line paths={rails} color="#a8a8a8" w={4.6} dash="26 26" />
      <Line paths={paleRoads} color="#d2cbb4" w={7} />
      <Line paths={paleRoads} color="#faf5d4" w={4.6} />
      <Line paths={yellowRoads} color="#d6c160" w={9.4} />
      <Line paths={yellowRoads} color="#ffe889" w={6.6} />
      <Line paths={metro} color="#a2a2a2" w={4.6} />
      <Line paths={metro} color="#ffffff" w={3} />
      <Line paths={metro} color="#9a9a9a" w={4.8} dash="27 27" />
      <Line paths={metro} color="#6fc2c6" w={2.4} dash="27 27" />
      <Line paths={metro} color="#62cdd0" w={1.2} />
      <Line paths={ramps} color="#f2b47c" w={6} />
      <Line paths={[expressway]} color="#f0b184" w={10} />
      <Line paths={[expresswayWide]} color="#f0b184" w={13} />
      <Line paths={[ringway]} color="#f0b184" w={15} />
      <Line paths={ramps} color="#ffc77d" w={4.4} />
      <Line paths={[expressway]} color="#ffc77d" w={8} />
      <Line paths={[expresswayWide]} color="#ffc77d" w={11} />
      <Line paths={[ringway]} color="#ffc77d" w={12.6} />

      <Label x={661} y={1085} color={BROWN_TEXT} size={15}>금촌</Label>
      <circle cx="775" cy="1119" r="6" fill="#fff" stroke="#4b5563" strokeWidth="1.6" />
      <circle cx="775" cy="1119" r="2" fill="#4b5563" />
      <Label x={775} y={1141} color="#454d5c">조리읍</Label>
      <Label x={775} y={1160} color="#454d5c">행정복지센터</Label>
      <Badge x={1099} y={1068} color={GREEN} />
      <Label x={1100} y={1096} color={GREEN_TEXT}>제이퍼블릭</Label>
      <Label x={1100} y={1115} color={GREEN_TEXT}>골프클럽</Label>
      <Badge x={687} y={1250} color="#d885b2">
        <path d="M-4.5 -6l2.5 1.5h4l2-2v4l-1 3.5h1v3.5h-1.2v-3l-2.3-1h-2v4h-1.2v-4l-1.3-1.5z M-5 5.5h9.5v1.3h-9.5z" fill="#fff" />
      </Badge>
      <Label x={687} y={1278} color={PINK_TEXT}>퍼스트가든</Label>
      <Stop x={460} y={1317} name="운정역" />
      <Stop x={413} y={1452} name="야당역" />
      <Stop x={409} y={1646} name="탄현역" />
      <Badge x={535} y={1434} color={GREEN}><GolfMark /></Badge>
      <Label x={535} y={1462} color={GREEN_TEXT}>오성골프클럽</Label>
      <Interchange x={709} y={1380} />
      <Label x={709} y={1405} color={BROWN_TEXT} size={15}>북고양</Label>
      <RouteSign x={785} y={1491}>363</RouteSign>
      <RouteSign x={397} y={1717}>98</RouteSign>
      <RouteSign x={1279} y={1082}>98</RouteSign>
      <RouteSign x={1586} y={1382}>367</RouteSign>
      <g transform="translate(787 1560)">
        <path d="M-15 -10h30c-1 5 2 7 2 12c0 8-9 9-17 13c-8-4-17-5-17-13c0-5 3-7 2-12z" fill="#4f76ee" stroke="#fff" strokeWidth="1" />
        <path d="M-15.5 -9.5l3.5-5.500c3 1.500 8 1 12-2c4 3 9 3.500 12 2l3.500 5.500z" fill="#ea5455" />
        <text y="5" fontSize="14" fontWeight="500" textAnchor="middle" fill="#fff">17</text>
      </g>
      <g transform="translate(1098 1574)">
        <ellipse cy="41" rx="4" ry="1.3" fill="#5a6270" />
        <path d="M0 40.500C-1.500 27 -19.500 19 -19.500 0A19.500 19.500 0 0 1 19.500 0C19.500 19 1.500 27 0 40.500Z" fill="#2389fb" stroke="#1a67cf" strokeWidth="1" />
        <circle r="10" fill="#fff" />
        <path d="M-4 -2h8l-4 4.500z" fill="#2389fb" />
      </g>
      <Interchange x={1073} y={1703} />
      <Label x={1073} y={1728} color={BROWN_TEXT} size={15}>사리현</Label>
      <Label x={781} y={1774} color="#6f7278" size={21}>일산동구</Label>
      <circle cx="482" cy="1771" r="8.5" fill="#fff" stroke="#555" strokeWidth="1.5" />
      <path d="M475.500 1771a6.500 6.500 0 0 1 13 0z" fill="#ea5455" />
      <Label x={494} y={1775} color="#2f2f33" anchor="start">일산역</Label>
      <Badge x={649} y={1662} color={GREEN}>
        <path d="M-6.500 4.500l4.500-8.500l2.500 4l1.500-2.500l4.500 7z" fill="#fff" />
      </Badge>
      <Label x={649} y={1690} color={GREEN_TEXT}>고봉산</Label>
      <Label x={649} y={1709} color={GREEN_TEXT}>(206.3m)</Label>
      <Badge x={1299} y={1307} color="#4f92cf"><SchoolMark /></Badge>
      <Label x={1299} y={1335} color={BLUE_TEXT}>국제법률경영</Label>
      <Label x={1299} y={1353} color={BLUE_TEXT}>대학원대학교</Label>
      <Badge x={1528} y={1259} color={GREEN}><GolfMark /></Badge>
      <Label x={1529} y={1288} color={GREEN_TEXT}>서서울CC</Label>
      <Badge x={1500} y={1357} color={GREEN}><GolfMark /></Badge>
      <Label x={1500} y={1386} color={GREEN_TEXT}>올림픽CC</Label>
      <Badge x={1475} y={1446} color="#4f92cf"><SchoolMark /></Badge>
      <Label x={1475} y={1474} color={BLUE_TEXT}>중부대학교</Label>
      <Label x={1475} y={1492} color={BLUE_TEXT}>고양캠퍼스</Label>
      <g transform="translate(1356 1716)">
        <ellipse rx="15" ry="11.3" fill="#5280f3" stroke="#3b65c4" strokeWidth="1" />
        <text y="5" fontSize="14" fontWeight="500" textAnchor="middle" fill="#fff">1</text>
      </g>
      <Badge x={1901} y={1391} color="#6a96ac"><StationMark color="#6a96ac" /></Badge>
      <Label x={1901} y={1419} color={TEAL_TEXT}>장흥역</Label>
      <Badge x={1799} y={1578} color="#6a96ac"><StationMark color="#6a96ac" /></Badge>
      <Label x={1799} y={1607} color={TEAL_TEXT}>일영역</Label>
      <Badge x={1691} y={1720} color={GREEN}>
        <path d="M0 -7l3 4h-1.500l3 4h-1.500l3 4h-5v2.500h-2v-2.500h-5l3-4h-1.500l3-4h-1.500z" fill="#fff" />
      </Badge>
      <Label x={1691} y={1749} color={GREEN_TEXT}>남경수목원</Label>
      <Badge x={1965} y={1123} color={GREEN} />
      <Label x={1935} y={1151} color={GREEN_TEXT} anchor="start">장흥</Label>
      <Label x={1943} y={1169} color={GREEN_TEXT} anchor="start">수</Label>
      <Label x={1948} y={1273} color={PINK_TEXT} anchor="start">장</Label>
      <Label x={1944} y={1356} color={PINK_TEXT} anchor="start">두</Label>
      <Badge x={1961} y={1408} color="#d877ac">
        <rect x="-5" y="-5" width="10" height="10" fill="none" stroke="#fff" strokeWidth="1.5" />
      </Badge>
    </svg>
  );
}

/* ---------- page ---------- */

const navItems = ["기능", "통합 분석", "수익률 계산기", "관심 물건", "공지사항"];
const saleRows = [["최저가/감정가", "70.0%"], ["특수권리", "-"]];
const analysisRows = [
  ["공시가격(만원)", "9,080만원"],
  ["1억 이하 여부", "X"],
  ["최저가/공시가격", "0.9"],
  ["층수", "2"],
  ["층확인", "일반층"],
  ["Elevator여부", "없음"],
];
const buildingRows = [
  ["지상층수", "4층"],
  ["지하층수", "-"],
  ["세대수", "8세대"],
  ["가구수", "0가구"],
  ["우편번호", "10260"],
  ["사용승인일", "1970-01-01"],
  ["대지면적(㎡)", "0㎡"],
  ["건축면적(㎡)", "158.91㎡"],
  ["연면적(㎡)", "481.2㎡"],
  ["건폐율(%)", "0%"],
  ["용적률(%)", "0%"],
  ["PNU", "4128510900101960000"],
  ["행정동명칭", "고봉동"],
  ["경도", "126.844387"],
  ["위도", "37.697378"],
];

function Rows({ rows }) {
  return (
    <dl className="divide-y divide-gray-200">
      {rows.map(([label, value]) => (
        <div key={label} className="flex items-center justify-between py-3 text-[21px] leading-[30px]">
          <dt className="text-gray-500">{label}</dt>
          <dd className="font-medium text-neutral-950">{value}</dd>
        </div>
      ))}
    </dl>
  );
}

function Card({ title, joined, children }) {
  return (
    <section className={joined ? "rounded-b-[15px] border border-t-0 border-gray-200 bg-white px-9 pb-9 shadow-sm" : "rounded-[15px] border border-gray-200 bg-white p-9 shadow-sm"}>
      {title && <h3 className="mb-[18px] text-[21px] leading-[30px] font-semibold text-gray-800">{title}</h3>}
      {children}
    </section>
  );
}

function Header() {
  return (
    <header className="relative z-10 border-b border-gray-200 bg-white">
      <div className="mx-auto flex h-24 max-w-[1920px] items-center justify-between px-12">
        <a href="#home" className="flex items-center gap-3">
          <span className="text-[36px] leading-[48px] font-bold text-[#155dfc]">부스터</span>
          <span className="text-[21px] leading-[30px] text-gray-500">Booster</span>
        </a>
        <nav className="flex items-center gap-12">
          {navItems.map((item) => (
            <a key={item} href={`#${item}`} className="text-[24px] leading-[36px] font-medium text-gray-700">{item}</a>
          ))}
        </nav>
        <div className="flex items-center gap-6 text-[21px] leading-[30px] text-neutral-950">
          <span>user@example.com</span>
          <button type="button" className="flex items-center gap-5 px-[15px] font-medium">
            <User size={24} />내 정보
          </button>
          <button type="button" className="flex items-center gap-5 px-[15px] font-medium">
            <LogOut size={24} />로그아웃
          </button>
        </div>
      </div>
    </header>
  );
}

function ScrollTrack() {
  return (
    <div className="flex w-[23px] shrink-0 flex-col items-center justify-between bg-[#fcfcfc] py-1.5" aria-hidden="true">
      <svg width="16" height="12" viewBox="0 0 16 12"><path d="M7 1.500Q8 0.200 9 1.500L15 10Q15.500 11.500 14 11.500H2Q0.500 11.500 1 10Z" fill="#8b8b8b" /></svg>
      <div className="mt-[406px] mb-auto h-[494px] w-[13px] rounded-full bg-[#8b8b8b]" />
      <svg width="16" height="12" viewBox="0 0 16 12"><path d="M7 10.500Q8 11.800 9 10.500L15 2Q15.500 0.500 14 0.500H2Q0.500 0.500 1 2Z" fill="#8b8b8b" /></svg>
    </div>
  );
}

export default function App() {
  return (
    <div className="flex h-screen overflow-hidden bg-gray-50 font-['Inter','Noto_Sans_CJK_KR',sans-serif]">
      <div className="min-w-0 flex-1">
        <Header />
        <main className="mx-auto -mt-1.5 max-w-[1920px] px-6">
          <div className="border-x border-gray-200 bg-white px-9 shadow-md">
            <div className="grid grid-cols-2 items-start gap-9">
              <div className="flex flex-col gap-9">
                <Card joined><Rows rows={saleRows} /></Card>
                <Card title="물건 분석"><Rows rows={analysisRows} /></Card>
              </div>
              <Card joined><Rows rows={buildingRows} /></Card>
            </div>
            <div className="pt-9">
              <Card title="위치 정보">
                <div className="overflow-hidden rounded-md border border-gray-200"><LocationMap /></div>
              </Card>
            </div>
          </div>
        </main>
      </div>
      <ScrollTrack />
      <button type="button" aria-label="Next.js 개발 도구" className="fixed bottom-7 left-7 flex size-[58px] items-center justify-center rounded-full border-2 border-neutral-950 bg-[#333333] shadow-xl inset-ring-2 inset-ring-[#4a4a4a]">
        <svg width="24" height="24" viewBox="0 0 24 24" fill="none" aria-hidden="true">
          <defs>
            <linearGradient id="slant" x1="4" y1="3" x2="20" y2="23" gradientUnits="userSpaceOnUse">
              <stop offset="0.7" stopColor="#fff" />
              <stop offset="1" stopColor="#fff" stopOpacity="0" />
            </linearGradient>
            <linearGradient id="stem" x1="18" y1="3" x2="18" y2="16" gradientUnits="userSpaceOnUse">
              <stop offset="0.2" stopColor="#fff" />
              <stop offset="1" stopColor="#fff" stopOpacity="0" />
            </linearGradient>
          </defs>
          <path d="M4.500 20V4.500L19 23" stroke="url(#slant)" strokeWidth="2.4" />
          <path d="M18.500 3.500V16" stroke="url(#stem)" strokeWidth="2.4" />
        </svg>
      </button>
    </div>
  );
}
